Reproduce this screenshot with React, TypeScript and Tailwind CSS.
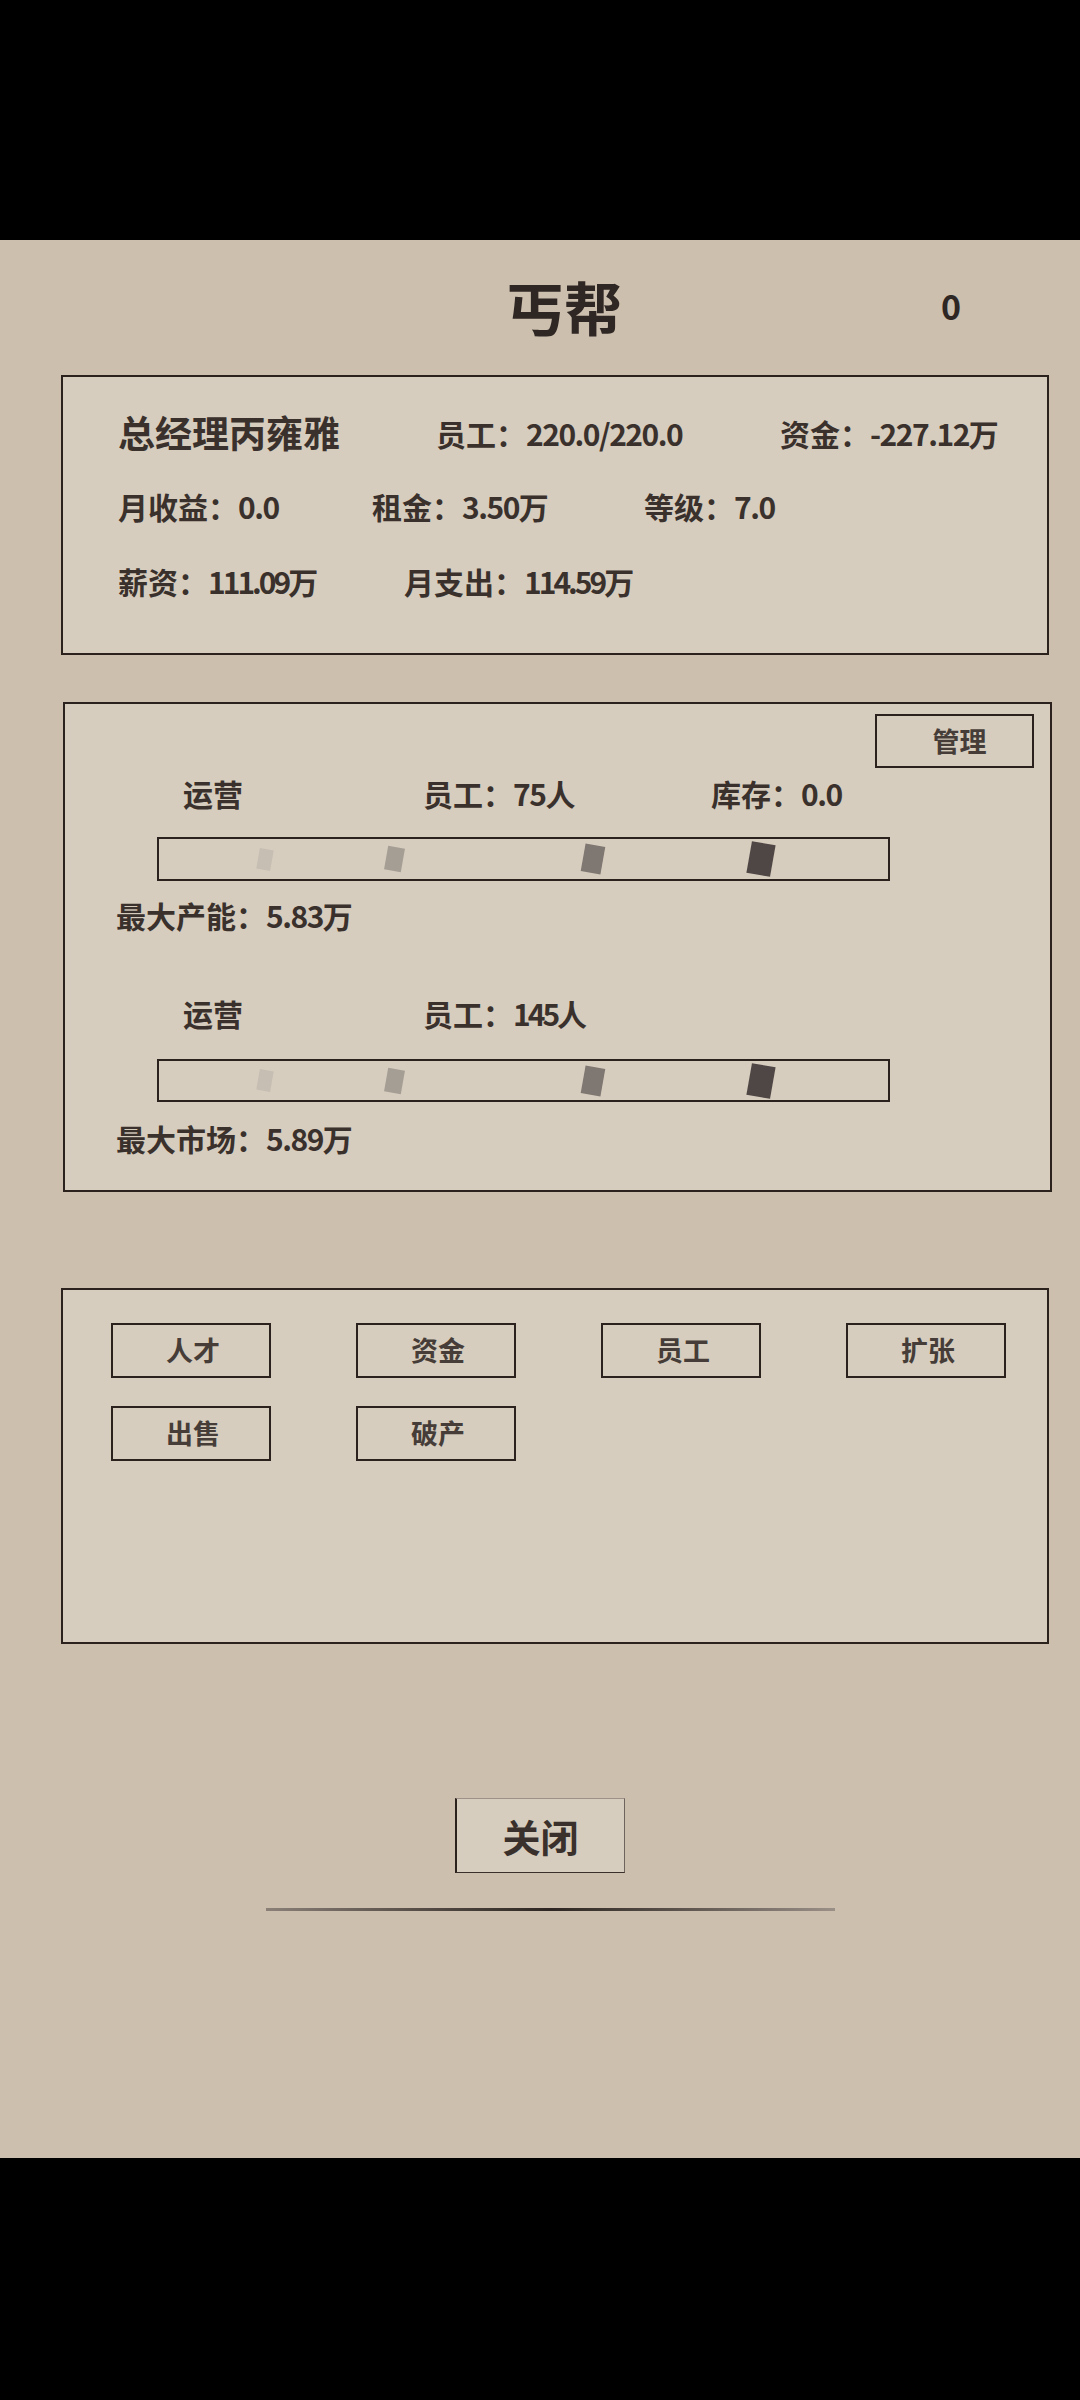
import React from 'react'

const font = { fontFamily: '"Noto Sans CJK SC", "Noto Sans", sans-serif' }

type Marker = { ml: string; size: string; color: string }

const markers: Marker[] = [
  { ml: 'ml-[99px]', size: 'w-[14px] h-[21px]', color: 'bg-[#c6beb3]' },
  { ml: 'ml-[114px]', size: 'w-[17px] h-[24px]', color: 'bg-[#a59e95]' },
  { ml: 'ml-[180px]', size: 'w-[20px] h-[28px]', color: 'bg-[#7f7771]' },
  { ml: 'ml-[146px]', size: 'w-[24px] h-[32px]', color: 'bg-[#4f4745]' },
]

// numbers in the game font are narrower than Noto's latin digits
function N({ children, tight }: { children: React.ReactNode; tight?: boolean }) {
  return <span className={tight ? 'tracking-[-3px]' : 'tracking-[-1.5px]'}>{children}</span>
}

function Bar({ className }: { className: string }) {
  return (
    <div className={`ml-[92px] flex w-[733px] items-center border-2 border-[#2b211d] ${className}`}>
      {markers.map((m, i) => (
        <span key={i} className={`${m.ml} ${m.size} ${m.color} shrink-0 rotate-[10deg]`} />
      ))}
    </div>
  )
}

function Btn({ label }: { label: string }) {
  return (
    <button className="flex h-[55px] w-[160px] items-center justify-center border-2 border-[#2b211d] bg-[#d7cdbe] pl-[4px] text-[27px] font-bold text-[#463d38]">
      {label}
    </button>
  )
}

export default function App() {
  return (
    <div style={font} className="w-[1080px] bg-black text-[#3a312d]">
      <div className="h-[240px]" />
      <div className="flex h-[1918px] flex-col bg-[#ccbfae]">
        {/* header */}
        <div className="mt-[37px] flex h-[58px] items-center pl-[506px]">
          <span className="text-[58px] font-bold leading-none text-[#2f2724]">丐帮</span>
          <span className="ml-[319px] text-[34px] font-bold leading-none text-[#2f2724]">0</span>
        </div>

        {/* summary */}
        <section className="ml-[61px] mt-[40px] h-[280px] w-[988px] border-2 border-[#2b211d] bg-[#d7cdbe] pl-[55px] pt-[36px] text-[30px] font-bold">
          <div className="flex h-[40px] items-center whitespace-nowrap">
            <span className="w-[318px] shrink-0 text-[37px]">总经理丙雍雅</span>
            <span className="w-[344px] shrink-0">员工：<N>220.0/220.0</N></span>
            <span>资金：<N>-227.12</N>万</span>
          </div>
          <div className="mt-[33px] flex h-[40px] items-center whitespace-nowrap">
            <span className="w-[254px] shrink-0">月收益：<N>0.0</N></span>
            <span className="w-[272px] shrink-0">租金：<N>3.50</N>万</span>
            <span>等级：<N>7.0</N></span>
          </div>
          <div className="mt-[35px] flex h-[40px] items-center whitespace-nowrap">
            <span className="w-[286px] shrink-0">薪资：<N tight>111.09</N>万</span>
            <span>月支出：<N tight>114.59</N>万</span>
          </div>
        </section>

        {/* production */}
        <section className="ml-[63px] mt-[47px] h-[490px] w-[989px] border-2 border-[#2b211d] bg-[#d7cdbe] text-[30px] font-bold">
          <div className="flex justify-end pr-[16px] pt-[10px]">
            <button className="flex h-[54px] w-[159px] items-center justify-center border-2 border-[#2b211d] pl-[10px] text-[27px] font-bold text-[#463d38]">
              管理
            </button>
          </div>
          <div className="mt-[5px] flex h-[40px] items-center whitespace-nowrap pl-[118px]">
            <span className="w-[240px] shrink-0">运营</span>
            <span className="w-[288px] shrink-0">员工：<N>75</N>人</span>
            <span>库存：<N>0.0</N></span>
          </div>
          <Bar className="mt-[24px] h-[44px]" />
          <div className="mt-[14px] flex h-[40px] items-center pl-[51px]">最大产能：<N>5.83</N>万</div>

          <div className="mt-[58px] flex h-[40px] items-center whitespace-nowrap pl-[118px]">
            <span className="w-[240px] shrink-0">运营</span>
            <span>员工：<N tight>145</N>人</span>
          </div>
          <Bar className="mt-[26px] h-[43px]" />
          <div className="mt-[16px] flex h-[40px] items-center pl-[51px]">最大市场：<N>5.89</N>万</div>
        </section>

        {/* actions */}
        <section className="ml-[61px] mt-[96px] h-[356px] w-[988px] border-2 border-[#2b211d] bg-[#d7cdbe] pl-[48px] pt-[33px]">
          <div className="grid grid-cols-[repeat(4,160px)] gap-x-[85px] gap-y-[28px]">
            <Btn label="人才" />
            <Btn label="资金" />
            <Btn label="员工" />
            <Btn label="扩张" />
            <Btn label="出售" />
            <Btn label="破产" />
          </div>
        </section>

        {/* close */}
        <div className="mt-[154px] flex justify-center">
          <button className="flex h-[75px] w-[170px] items-center justify-center border border-l-2 border-[#6f645d] border-b-[#3a2f2a] border-l-[#2b211d] border-t-[#9d9288] bg-[#d7cdbe] text-[38px] font-bold text-[#3a312d]">
            关闭
          </button>
        </div>
        <div className="ml-[266px] mt-[35px] h-[3px] w-[569px] bg-gradient-to-r from-[#8a8078] via-[#2e2622] to-[#9a9088]" />
      </div>
      <div className="h-[242px]" />
    </div>
  )
}
